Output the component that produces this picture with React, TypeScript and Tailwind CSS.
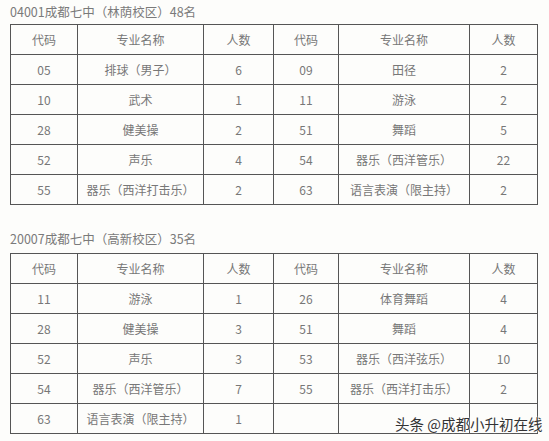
const table1 = [
  ["05", "排球（男子）", "6", "09", "田径", "2"],
  ["10", "武术", "1", "11", "游泳", "2"],
  ["28", "健美操", "2", "51", "舞蹈", "5"],
  ["52", "声乐", "4", "54", "器乐（西洋管乐）", "22"],
  ["55", "器乐（西洋打击乐）", "2", "63", "语言表演（限主持）", "2"],
];

const table2 = [
  ["11", "游泳", "1", "26", "体育舞蹈", "4"],
  ["28", "健美操", "3", "51", "舞蹈", "4"],
  ["52", "声乐", "3", "53", "器乐（西洋弦乐）", "10"],
  ["54", "器乐（西洋管乐）", "7", "55", "器乐（西洋打击乐）", "2"],
  ["63", "语言表演（限主持）", "1", "", "", ""],
];

const header = ["代码", "专业名称", "人数", "代码", "专业名称", "人数"];

function Table({ rows }: { rows: string[][] }) {
  return (
    <table className="w-[527px] table-fixed border-collapse border border-[#555] text-[12px] text-[#777]">
      <colgroup>
        <col className="w-[67px]" />
        <col className="w-[126px]" />
        <col className="w-[70px]" />
        <col className="w-[65px]" />
        <col className="w-[131px]" />
        <col className="w-[68px]" />
      </colgroup>
      <thead>
        <tr className="h-[30px]">
          {header.map((h, i) => (
            <th key={i} className="border border-[#555] font-normal text-center">{h}</th>
          ))}
        </tr>
      </thead>
      <tbody>
        {rows.map((r, i) => (
          <tr key={i} className="h-[30px]">
            {r.map((c, j) => (
              <td key={j} className="border border-[#555] text-center">{c}</td>
            ))}
          </tr>
        ))}
      </tbody>
    </table>
  );
}

export default function App() {
  return (
    <div className="relative w-[549px] h-[441px] bg-[#fdfdfb] pl-[10px] overflow-hidden font-['Noto_Sans_CJK_SC',sans-serif]">
      <div className="h-[24px] leading-[24px] text-[12.5px] text-[#7a7a7a]">04001成都七中（林荫校区）48名</div>
      <Table rows={table1} />

      <div className="mt-[20px] h-[28px] leading-[28px] text-[12.5px] text-[#7a7a7a]">20007成都七中（高新校区）35名</div>
      <Table rows={table2} />

      {/* watermark */}
      <div className="absolute left-[395px] top-[414px] text-[14.5px] leading-[20px] text-[#333] whitespace-nowrap [text-shadow:0_0_2px_#fff,0_0_2px_#fff]">
        头条 @成都小升初在线
      </div>
    </div>
  );
}
